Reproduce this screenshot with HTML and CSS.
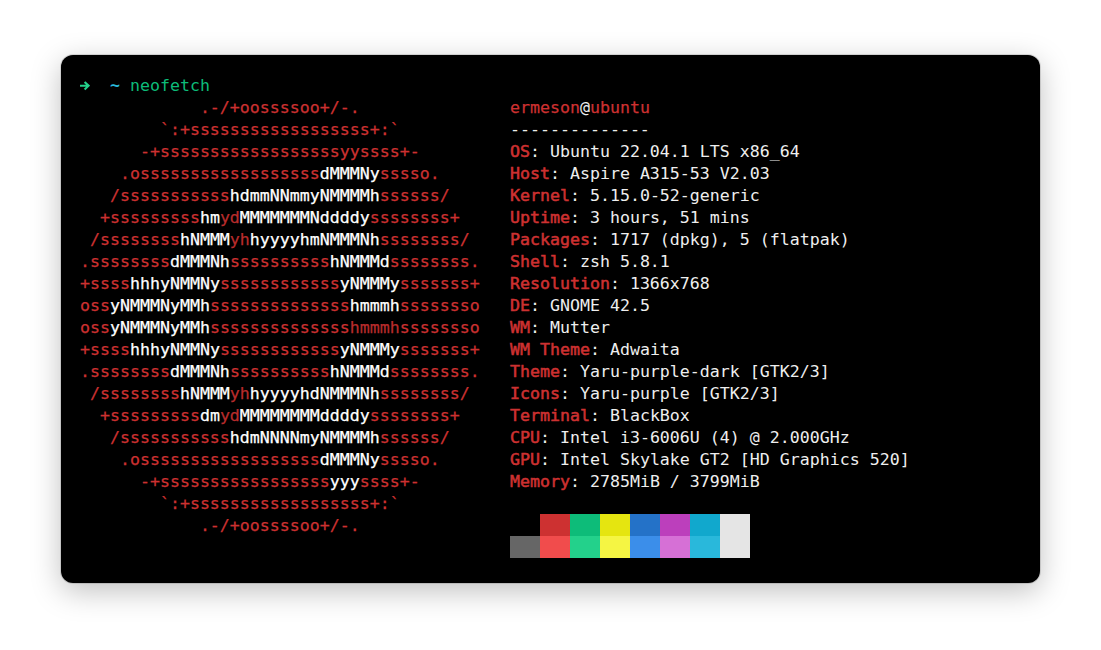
FILE: index.html
```
<!DOCTYPE html>
<html lang="en">
<head>
<meta charset="utf-8">
<title>neofetch</title>
<link rel="stylesheet" href="styles.css">
</head>
<body>
<main class="window">
<div class="prompt"><svg class="arrow" viewBox="0 0 10 10" aria-label="prompt arrow"><path d="M0 4.7H8.6M4.6 1 8.6 4.7 4.6 8.5"/></svg>  <span class="cwd">~</span> <span class="cmd">neofetch</span></div>
<div class="fetch">
<div class="logo">
<div class="line">            .-/+oossssoo+/-.</div>
<div class="line">        `:+ssssssssssssssssss+:`</div>
<div class="line">      -+ssssssssssssssssssyyssss+-</div>
<div class="line">    .ossssssssssssssssss<b>dMMMNy</b>sssso.</div>
<div class="line">   /sssssssssss<b>hdmmNNmmyNMMMMh</b>ssssss/</div>
<div class="line">  +sssssssss<b>hm</b><i>yd</i><b>MMMMMMMNddddy</b>ssssssss+</div>
<div class="line"> /ssssssss<b>hNMMM</b><i>yh</i><b>hyyyyhmNMMMNh</b>ssssssss/</div>
<div class="line">.ssssssss<b>dMMMNh</b>ssssssssss<b>hNMMMd</b>ssssssss.</div>
<div class="line">+ssss<b>hhhyNMMNy</b>ssssssssssss<b>yNMMMy</b>sssssss+</div>
<div class="line">oss<b>yNMMMNyMMh</b>ssssssssssssss<b>hmmmh</b>ssssssso</div>
<div class="line">oss<b>yNMMMNyMMh</b>ssssssssssssss<i>hmmmh</i>ssssssso</div>
<div class="line">+ssss<b>hhhyNMMNy</b>ssssssssssss<b>yNMMMy</b>sssssss+</div>
<div class="line">.ssssssss<b>dMMMNh</b>ssssssssss<b>hNMMMd</b>ssssssss.</div>
<div class="line"> /ssssssss<b>hNMMM</b><i>yh</i><b>hyyyyhdNMMMNh</b>ssssssss/</div>
<div class="line">  +sssssssss<b>dm</b><i>yd</i><b>MMMMMMMMddddy</b>ssssssss+</div>
<div class="line">   /sssssssssss<b>hdmNNNNmyNMMMMh</b>ssssss/</div>
<div class="line">    .ossssssssssssssssss<b>dMMMNy</b>sssso.</div>
<div class="line">      -+sssssssssssssssss<b>yyy</b>ssss+-</div>
<div class="line">        `:+ssssssssssssssssss+:`</div>
<div class="line">            .-/+oossssoo+/-.</div>
</div>
<div class="info">
<div class="row title"><strong>ermeson</strong><span>@</span><strong>ubuntu</strong></div>
<div class="row">--------------</div>
<div class="row"><strong>OS</strong>: Ubuntu 22.04.1 LTS x86_64</div>
<div class="row"><strong>Host</strong>: Aspire A315-53 V2.03</div>
<div class="row"><strong>Kernel</strong>: 5.15.0-52-generic</div>
<div class="row"><strong>Uptime</strong>: 3 hours, 51 mins</div>
<div class="row"><strong>Packages</strong>: 1717 (dpkg), 5 (flatpak)</div>
<div class="row"><strong>Shell</strong>: zsh 5.8.1</div>
<div class="row"><strong>Resolution</strong>: 1366x768</div>
<div class="row"><strong>DE</strong>: GNOME 42.5</div>
<div class="row"><strong>WM</strong>: Mutter</div>
<div class="row"><strong>WM Theme</strong>: Adwaita</div>
<div class="row"><strong>Theme</strong>: Yaru-purple-dark [GTK2/3]</div>
<div class="row"><strong>Icons</strong>: Yaru-purple [GTK2/3]</div>
<div class="row"><strong>Terminal</strong>: BlackBox</div>
<div class="row"><strong>CPU</strong>: Intel i3-6006U (4) @ 2.000GHz</div>
<div class="row"><strong>GPU</strong>: Intel Skylake GT2 [HD Graphics 520]</div>
<div class="row"><strong>Memory</strong>: 2785MiB / 3799MiB</div>
<div class="palette">
<i class="c0"></i><i class="c1"></i><i class="c2"></i><i class="c3"></i><i class="c4"></i><i class="c5"></i><i class="c6"></i><i class="c7"></i>
<i class="c8"></i><i class="c9"></i><i class="c10"></i><i class="c11"></i><i class="c12"></i><i class="c13"></i><i class="c14"></i><i class="c15"></i>
</div>
</div>
</div>
</main>
</body>
</html>
```
FILE: styles.css
```
html, body {
  margin: 0;
  height: 100%;
  background: #fff;
  overflow: hidden;
}
body {
  box-sizing: border-box;
  padding: 55px 61px 0;
}
.window {
  box-sizing: border-box;
  height: 528px;
  padding: 20px 19px 24px;
  background: #000;
  border-radius: 12px;
  box-shadow: 0 0 0 1px rgba(0, 0, 0, .12), 0 8px 30px rgba(0, 0, 0, .25);
  color: #eee;
  font: 16.6px/22px "DejaVu Sans Mono", "Liberation Mono", monospace;
}
.prompt {
  height: 22px;
  white-space: pre;
}
.arrow {
  display: inline-block;
  width: 10px;
  height: 10px;
  vertical-align: 0;
  fill: none;
  stroke: #23d18b;
  stroke-width: 2.1;
}
.cwd {
  color: #29b8db;
  font-weight: bold;
}
.cmd {
  color: #0dbc79;
}
.fetch {
  display: grid;
  grid-template-columns: 430px 1fr;
}
.logo {
  color: #cd3131;
  -webkit-text-stroke: .25px currentColor;
}
.line {
  height: 22px;
  white-space: pre;
}
.logo b {
  color: #fff;
  font-weight: normal;
}
.logo i {
  color: #b82c2c;
  font-style: normal;
}
.row {
  height: 22px;
  white-space: pre;
}
.row strong {
  color: #cd3131;
  font-weight: normal;
  -webkit-text-stroke: .55px currentColor;
}
.title strong {
  -webkit-text-stroke: .25px currentColor;
}
.palette {
  display: grid;
  grid-template-columns: repeat(8, 30px);
  grid-auto-rows: 22px;
  margin-top: 21px;
}
.c0 { background: #000; }
.c1 { background: #cd3131; }
.c2 { background: #0dbc79; }
.c3 { background: #e5e510; }
.c4 { background: #2472c8; }
.c5 { background: #bc3fbc; }
.c6 { background: #11a8cd; }
.c7 { background: #e5e5e5; }
.c8 { background: #666; }
.c9 { background: #f14c4c; }
.c10 { background: #23d18b; }
.c11 { background: #f5f543; }
.c12 { background: #3b8eea; }
.c13 { background: #d670d6; }
.c14 { background: #29b8db; }
.c15 { background: #e5e5e5; }
```
